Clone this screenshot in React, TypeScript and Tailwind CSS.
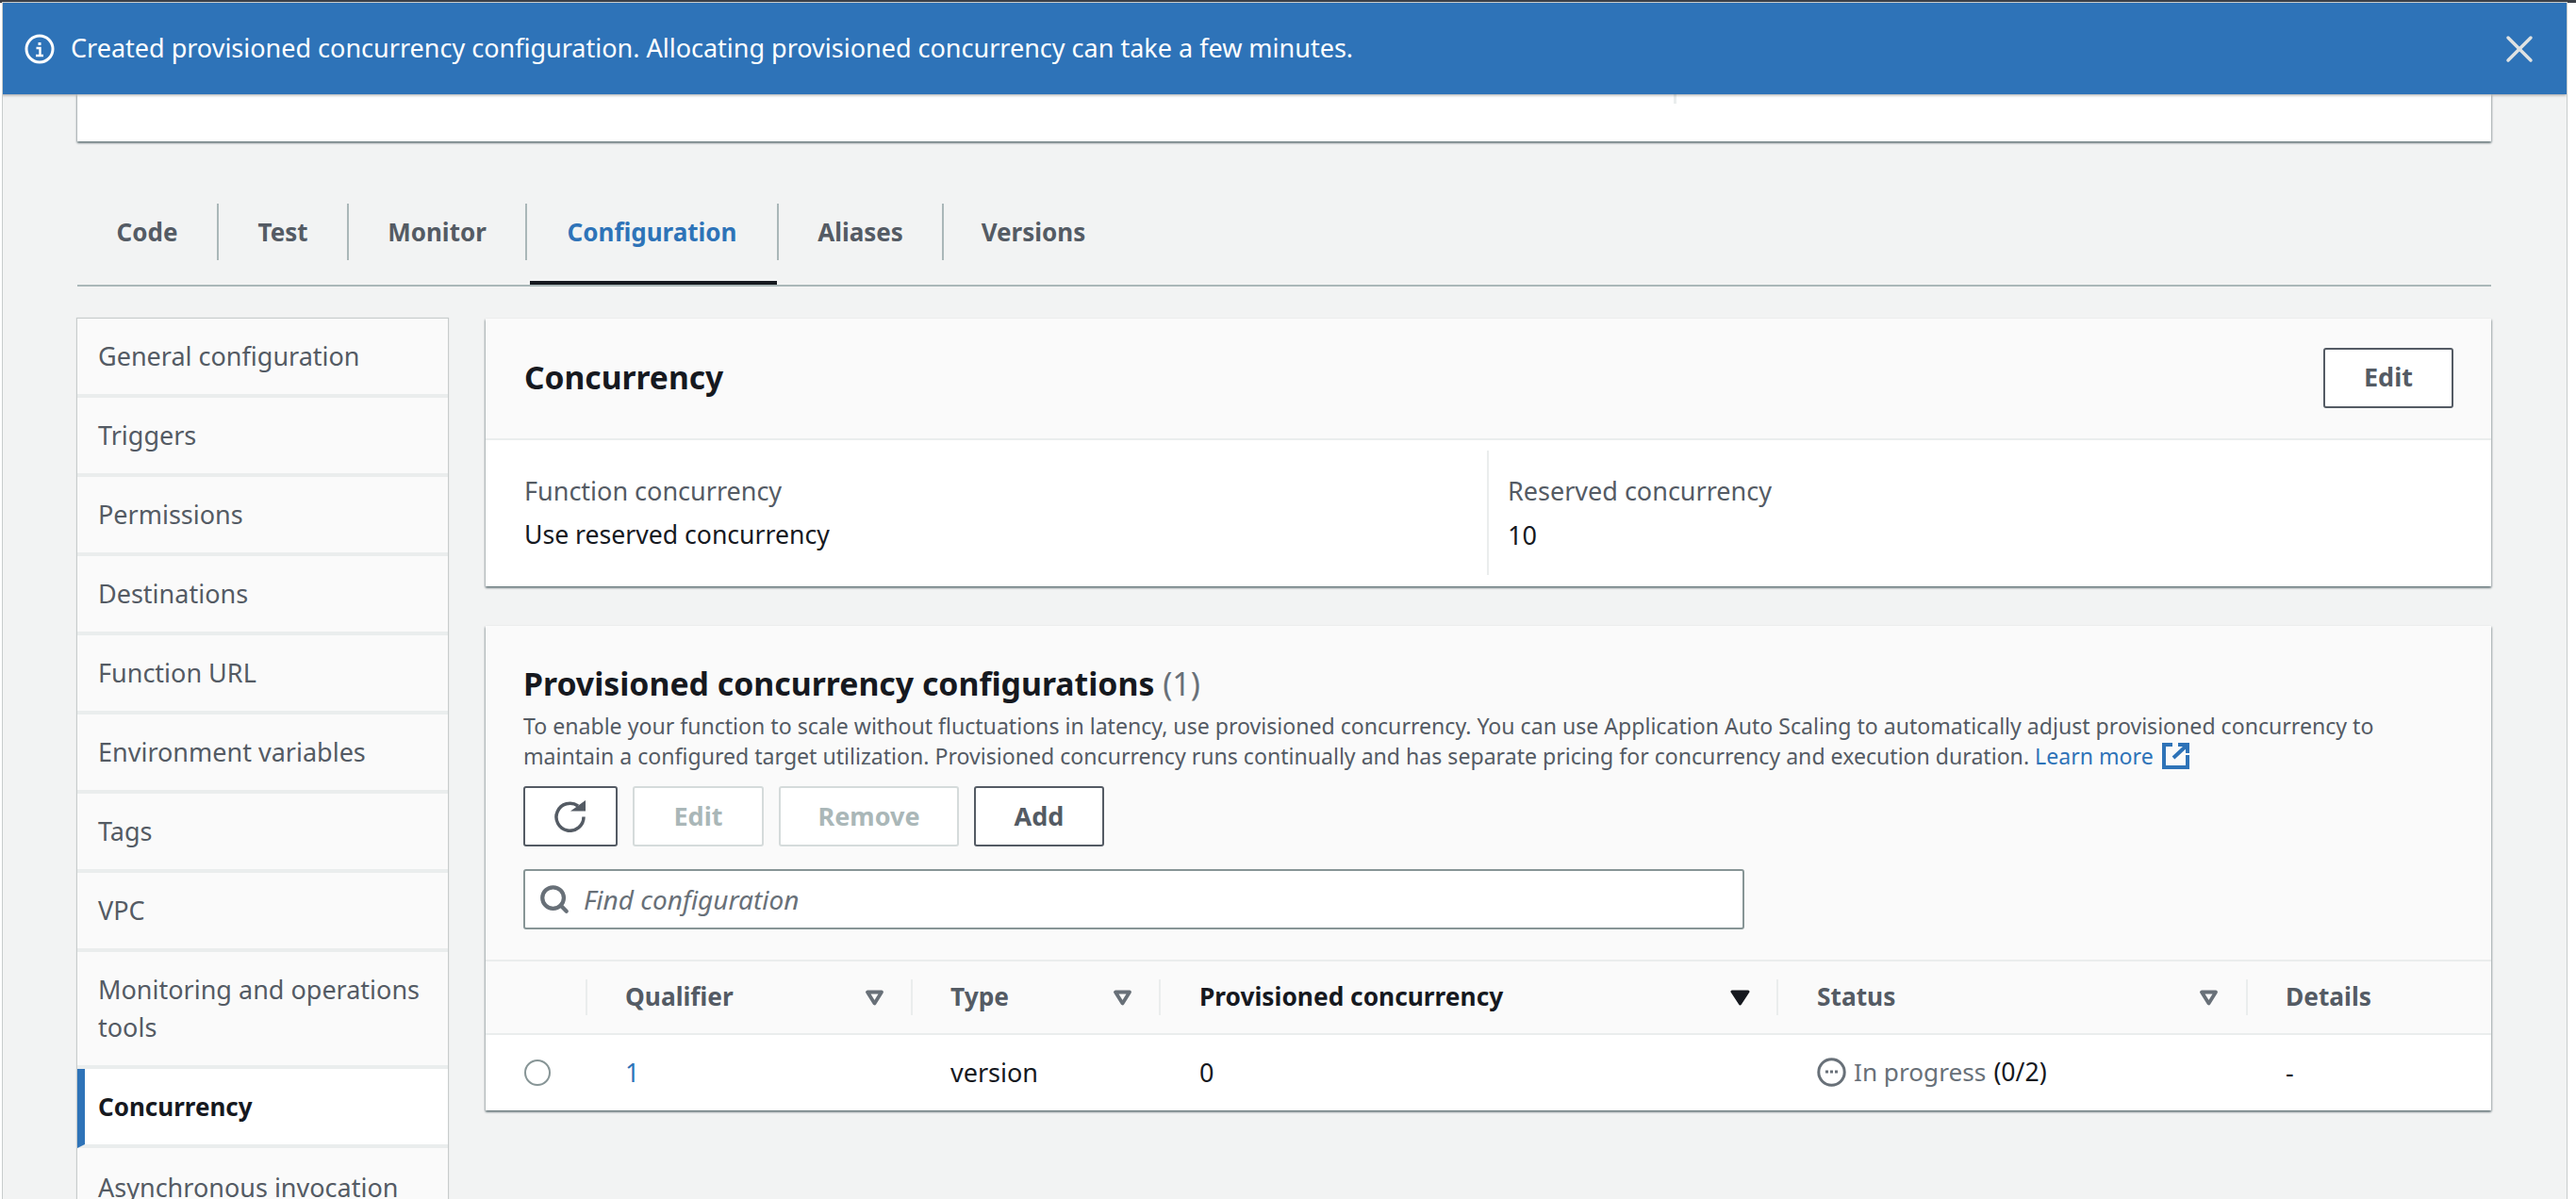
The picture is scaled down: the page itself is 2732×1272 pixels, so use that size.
import React from 'react';
import { X, Search } from 'lucide-react';

const sideItems = [
  'General configuration',
  'Triggers',
  'Permissions',
  'Destinations',
  'Function URL',
  'Environment variables',
  'Tags',
  'VPC',
];

const tabs = [
  { label: 'Code', width: 'w-[150px]' },
  { label: 'Test', width: 'w-[138px]' },
  { label: 'Monitor', width: 'w-[189px]' },
  { label: 'Configuration', width: 'w-[267px]' },
  { label: 'Aliases', width: 'w-[175px]' },
  { label: 'Versions', width: 'w-[190px]' },
];

const cardShadow =
  'shadow-[0_2px_2px_0_rgba(0,28,36,0.4),1px_1px_2px_0_rgba(0,28,36,0.2),-1px_1px_2px_0_rgba(0,28,36,0.2)]';

const SortDown = ({ active }: { active?: boolean }) => (
  <svg width="21" height="17" viewBox="0 0 21 17" className="shrink-0">
    {active ? (
      <path d="M2 2h17l-8.5 13z" fill="#16191f" stroke="#16191f" strokeWidth="3" strokeLinejoin="round" />
    ) : (
      <path d="M3 2.5h15l-7.5 12z" fill="none" stroke="#687078" strokeWidth="3.8" strokeLinejoin="round" />
    )}
  </svg>
);

const App = () => {
  return (
    <div className="h-[1272px] w-[2732px] overflow-hidden bg-white font-['Noto_Sans',sans-serif] text-[27px] text-[#16191f]">
      <div className="h-[3px] bg-[#3b4048]" />
      <div className="ml-[3px] mr-[10px] h-[1269px] overflow-hidden bg-[#f2f3f3] shadow-[0_0_0_1px_#c8cccc]">
        {/* Flash banner */}
        <div className="relative z-10 -ml-[2px] flex h-[97px] items-center justify-between bg-[#2e73b8] pl-[25px] pr-[26px] shadow-[0_1px_3px_rgba(0,0,0,0.35)]">
          <div className="flex items-center gap-[17px] text-white">
            <svg width="32" height="32" viewBox="0 0 32 32" fill="none" stroke="white" className="shrink-0">
              <circle cx="16" cy="16" r="14" strokeWidth="3" />
              <path d="M14.5 10.5h3" strokeWidth="3" />
              <path d="M12.5 15h4v8M12 23h8" strokeWidth="2.4" />
            </svg>
            <span>Created provisioned concurrency configuration. Allocating provisioned concurrency can take a few minutes.</span>
          </div>
          <X className="h-[48px] w-[48px] text-[#dfe2e2]" strokeWidth={1.75} />
        </div>

        <div className="pl-[79px] pr-[80px]">
          {/* Function overview, scrolled away */}
          <div className={`flex h-[50px] justify-end bg-white pr-[864px] ${cardShadow}`}>
            <div className="h-[10px] w-[3px] bg-[#eaeded]" />
          </div>

          {/* Tabs */}
          <div className="mt-[66px] flex h-[88px] items-start border-b-2 border-[#aab7b8]">
            {tabs.map((tab, i) => (
              <div
                key={tab.label}
                className={`relative flex h-[60px] items-center justify-center border-[#aab7b8] text-[26px] font-bold ${tab.width} ${
                  i < tabs.length - 1 ? 'border-r-2' : ''
                } ${tab.label === 'Configuration' ? 'text-[#2e73b8]' : 'text-[#545b64]'}`}
              >
                {tab.label}
                {tab.label === 'Configuration' && (
                  <div className="absolute -bottom-[26px] left-[3px] right-0 h-[4px] bg-[#16191f]" />
                )}
              </div>
            ))}
          </div>

          <div className="mt-[34px] flex gap-[40px]">
            {/* Side navigation */}
            <div className="w-[393px] shrink-0 bg-[#fafafa] text-[#545b64] shadow-[0_0_1px_1px_#c8cccc]">
              {sideItems.map((item) => (
                <div key={item} className="flex h-[84px] items-center border-b-4 border-[#eaeded] pl-[22px]">
                  {item}
                </div>
              ))}
              <div className="flex h-[124px] items-center border-b-4 border-[#eaeded] pl-[22px] pr-[20px] leading-[40px]">
                Monitoring and operations tools
              </div>
              <div className="flex h-[84px] items-center border-b-4 border-l-[8px] border-[#eaeded] border-l-[#2e73b8] bg-white pl-[14px] text-[26px] font-bold text-[#16191f]">
                Concurrency
              </div>
              <div className="flex h-[84px] items-center pl-[22px]">Asynchronous invocation</div>
            </div>

            <div className="flex min-w-0 flex-1 flex-col gap-[42px]">
              {/* Concurrency */}
              <div className={`bg-white ${cardShadow}`}>
                <div className="flex h-[129px] items-center justify-between border-b-2 border-[#eaeded] bg-[#fafafa] pb-[2px] pl-[41px] pr-[40px]">
                  <h2 className="text-[33.6px] font-bold">Concurrency</h2>
                  <button className="h-[64px] w-[138px] rounded-[3px] border-2 border-[#545b64] bg-white text-[27px] font-bold text-[#545b64]">
                    Edit
                  </button>
                </div>
                <div className="flex h-[155px] pb-[12px] pt-[11px]">
                  <div className="w-[1064px] border-r-2 border-[#eaeded] pl-[41px] pt-[19px] leading-[47px]">
                    <div className="text-[#545b64]">Function concurrency</div>
                    <div className="text-[26.6px]">Use reserved concurrency</div>
                  </div>
                  <div className="pl-[20px] pt-[19px] leading-[47px]">
                    <div className="text-[#545b64]">Reserved concurrency</div>
                    <div>10</div>
                  </div>
                </div>
              </div>

              {/* Provisioned concurrency configurations */}
              <div className={`bg-white ${cardShadow}`}>
                <div className="h-[356px] border-b-2 border-[#eaeded] bg-[#fafafa] pl-[40px] pr-[41px] pt-[37px]">
                  <h2 className="text-[33.8px] font-bold leading-[48px]">
                    Provisioned concurrency configurations <span className="font-normal text-[#687078]">(1)</span>
                  </h2>
                  <p className="mt-[5px] text-[23.1px] leading-[32px] text-[#545b64]">
                    To enable your function to scale without fluctuations in latency, use provisioned concurrency. You can use Application Auto Scaling to automatically adjust provisioned concurrency to maintain a configured target utilization. Provisioned concurrency runs continually and has separate pricing for concurrency and execution duration.{' '}
                    <span className="whitespace-nowrap text-[#2e73b8]">
                      Learn more
                      <svg width="29" height="28" viewBox="0 0 29 28" fill="none" stroke="#2e73b8" strokeWidth="4" className="ml-[9px] inline-block align-[-5px]">
                        <path d="M11 2H2v24h25V13M12 16L26 3M17 2h10v9" />
                      </svg>
                    </span>
                  </p>
                  <div className="mt-[16px] flex gap-[16px]">
                    <button className="flex h-[64px] w-[100px] items-center justify-center rounded-[3px] border-2 border-[#545b64] bg-white">
                      <svg width="34" height="34" viewBox="0 0 34 34" fill="none" stroke="#545b64" strokeWidth="3.5">
                        <path d="M25 6A14.5 14.5 0 1 0 31 17.5" />
                        <path d="M17 11.5h16V0z" fill="#545b64" stroke="none" />
                      </svg>
                    </button>
                    <button className="h-[64px] w-[139px] rounded-[3px] border-2 border-[#d5dbdb] bg-white text-[27px] font-bold text-[#aab7b8]">Edit</button>
                    <button className="h-[64px] w-[191px] rounded-[3px] border-2 border-[#d5dbdb] bg-white text-[27px] font-bold text-[#aab7b8]">Remove</button>
                    <button className="h-[64px] w-[138px] rounded-[3px] border-2 border-[#545b64] bg-white text-[27px] font-bold text-[#545b64]">Add</button>
                  </div>
                  <div className="mt-[24px] flex h-[64px] w-[1295px] items-center gap-[14px] rounded-[3px] border-2 border-[#879596] bg-white pl-[14px]">
                    <Search className="h-[34px] w-[34px] text-[#687078]" strokeWidth={3} />
                    <span className="text-[28px] italic text-[#687078]">Find configuration</span>
                  </div>
                </div>

                {/* Table */}
                <div className="flex h-[78px] items-center border-b-2 border-[#eaeded] bg-[#fafafa] text-[26.3px] font-bold text-[#545b64]">
                  <div className="h-[38px] w-[108px] border-r-2 border-[#eaeded]" />
                  <div className="flex h-[38px] w-[345px] items-center justify-between border-r-2 border-[#eaeded] pl-[40px] pr-[28px]">
                    Qualifier <SortDown />
                  </div>
                  <div className="flex h-[38px] w-[263px] items-center justify-between border-r-2 border-[#eaeded] pl-[40px] pr-[28px]">
                    Type <SortDown />
                  </div>
                  <div className="flex h-[38px] w-[655px] items-center justify-between border-r-2 border-[#eaeded] pl-[41px] pr-[28px] text-[#16191f]">
                    Provisioned concurrency <SortDown active />
                  </div>
                  <div className="flex h-[38px] w-[498px] items-center justify-between border-r-2 border-[#eaeded] pl-[41px] pr-[29px]">
                    Status <SortDown />
                  </div>
                  <div className="pl-[40px]">Details</div>
                </div>
                <div className="flex h-[80px] items-center bg-white">
                  <div className="flex w-[108px] items-center pl-[41px]">
                    <div className="h-[28px] w-[28px] rounded-full border-2 border-[#879596]" />
                  </div>
                  <div className="w-[345px] pl-[40px] text-[#2e73b8]">1</div>
                  <div className="w-[263px] pl-[40px]">version</div>
                  <div className="w-[655px] pl-[41px]">0</div>
                  <div className="flex w-[498px] items-center pl-[41px]">
                    <svg width="31" height="31" viewBox="0 0 31 31" className="mr-[8px] shrink-0">
                      <circle cx="15.5" cy="15.5" r="13.7" fill="none" stroke="#687078" strokeWidth="3" />
                      <path d="M9 15h3M14 15h3M19 15h3" stroke="#687078" strokeWidth="3" />
                    </svg>
                    <span className="mr-[8px] text-[26.2px] text-[#687078]">In progress</span>
                    <span className="text-[26.6px]">(0/2)</span>
                  </div>
                  <div className="pl-[40px]">-</div>
                </div>
              </div>
            </div>
          </div>
        </div>
      </div>
    </div>
  );
};

export default App;
